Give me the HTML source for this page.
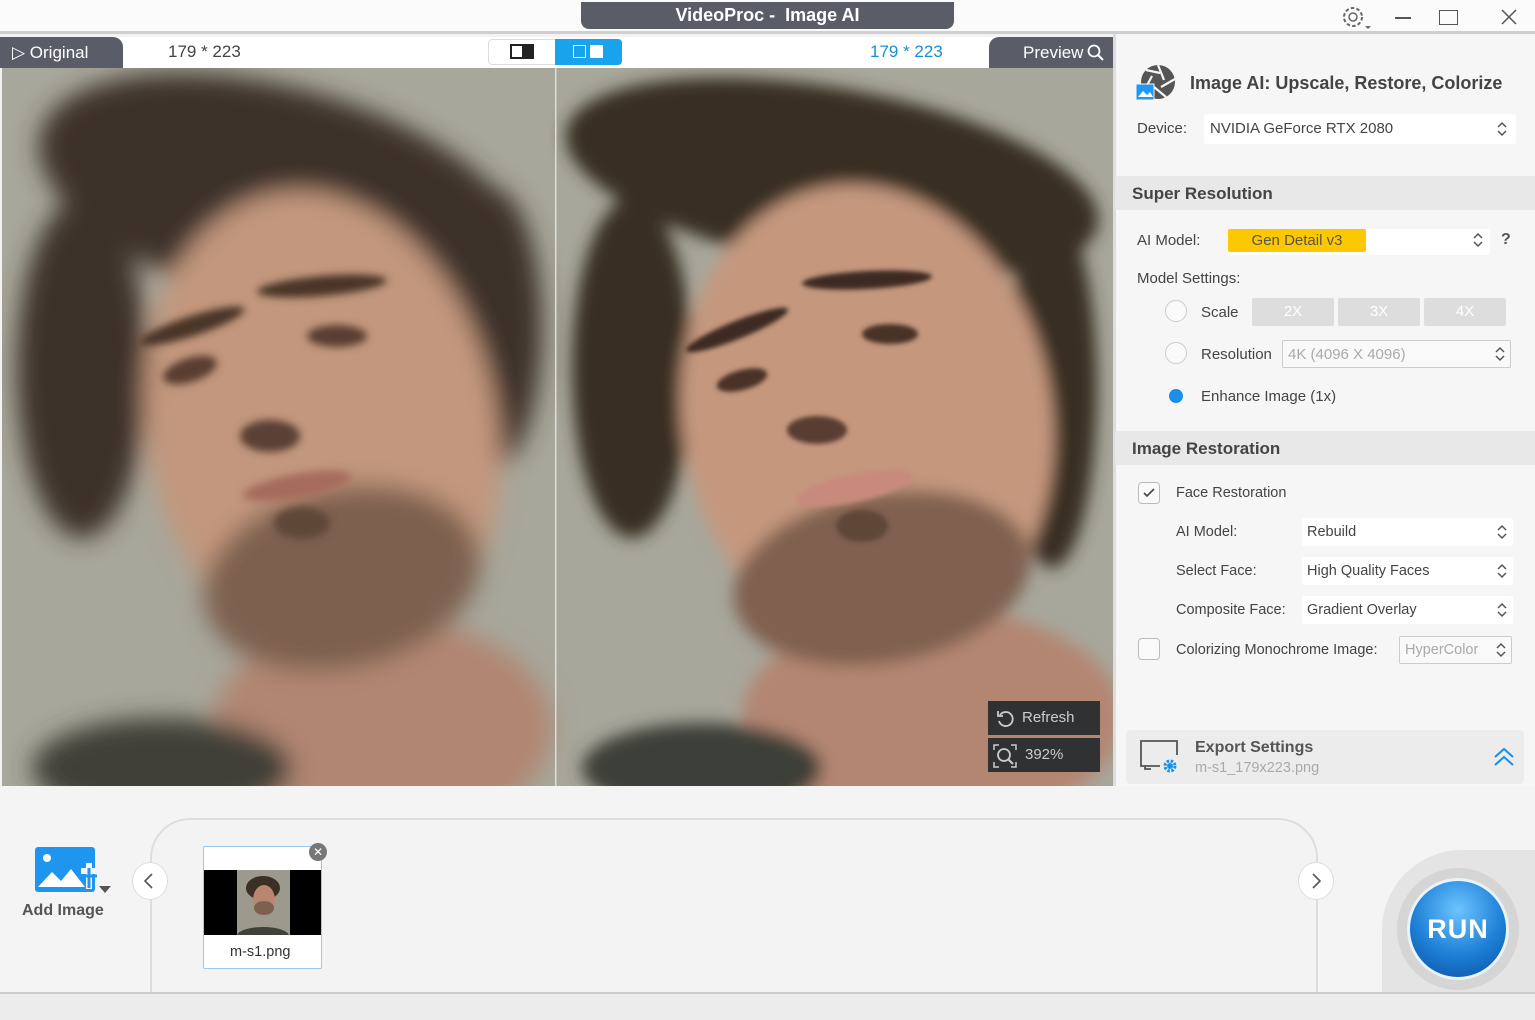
<!DOCTYPE html>
<html><head><meta charset="utf-8">
<style>
*{box-sizing:border-box;margin:0;padding:0}
body{width:1535px;height:1020px;overflow:hidden;background:#f3f3f4;font-family:"Liberation Sans",sans-serif;position:relative;color:#333}
.a{position:absolute}
.t{font-size:15px;color:#444;white-space:nowrap}
.sel{position:absolute;background:#fff;height:30px;border-radius:2px}
.sect{position:absolute;left:1115px;width:420px;height:34px;background:#e8e8e9;font-weight:bold;font-size:17px;color:#444;padding:8px 0 0 17px}
.radio{position:absolute;width:22px;height:22px;border-radius:50%;border:1px solid #ccc;background:#fafafa}
.btn{position:absolute;top:298px;width:82px;height:28px;background:#ddd;color:#fff;font-size:15px;text-align:center;line-height:28px;border-radius:2px}
.chk{position:absolute;width:22px;height:22px;border:1px solid #bbb;border-radius:4px;background:#fafafa}
</style></head><body>
<div class="a" style="left:0;top:0;width:1535px;height:34px;background:#fbfbfb;border-bottom:3px solid #cfcfcf"></div>
<div class="a" style="left:581px;top:2px;width:373px;height:27px;background:#5a5c68;border-radius:0 0 8px 8px;color:#fff;font-weight:bold;font-size:18px;text-align:center;line-height:27px">VideoProc -&nbsp; Image AI</div>
<svg class="a" style="left:1338px;top:4px" width="36" height="28" viewBox="0 0 36 28"><circle cx="15" cy="13" r="9" fill="none" stroke="#666" stroke-width="2" stroke-dasharray="3.5 2.2"/><circle cx="15" cy="13" r="4" fill="none" stroke="#666" stroke-width="1.5"/><path d="M27 22l3 3 3-3z" fill="#666"/></svg>
<div class="a" style="left:1395px;top:17px;width:16px;height:1.5px;background:#555"></div>
<div class="a" style="left:1439px;top:10px;width:19px;height:15px;border:1.5px solid #555"></div>
<svg class="a" style="left:1501px;top:9px" width="16" height="16"><path d="M1 1L15 15M15 1L1 15" stroke="#555" stroke-width="1.5"/></svg>

<div class="a" style="left:0;top:37px;width:1113px;height:31px;background:#fff"></div>
<div class="a" style="left:0;top:37px;width:123px;height:31px;background:#5a5c68;border-radius:0 10px 0 0;color:#fff;font-size:17px;line-height:31px;padding-left:12px">▷ Original</div>
<div class="a" style="left:989px;top:37px;width:124px;height:31px;background:#5a5c68;border-radius:10px 0 0 0;color:#fff;font-size:17px;line-height:31px;padding-left:34px">Preview
<svg style="position:absolute;left:98px;top:7px" width="18" height="18"><circle cx="7" cy="7" r="5.5" fill="none" stroke="#fff" stroke-width="1.8"/><path d="M11 11l5 5" stroke="#fff" stroke-width="2"/></svg></div>
<div class="a t" style="left:168px;top:42px;font-size:17px">179 * 223</div>
<div class="a t" style="left:870px;top:42px;font-size:17px;color:#1a8fd6">179 * 223</div>
<div class="a" style="left:488px;top:39px;width:134px;height:26px;border:1px solid #ddd;border-radius:4px;background:#fff"></div>
<div class="a" style="left:510px;top:44px;width:24px;height:15px;border:2px solid #222;background:linear-gradient(90deg,#fff 50%,#222 50%)"></div>
<div class="a" style="left:555px;top:39px;width:67px;height:26px;background:#19a3ec;border-radius:0 4px 4px 0"></div>
<div class="a" style="left:573px;top:45px;width:13px;height:13px;border:1.5px solid #fff"></div>
<div class="a" style="left:590px;top:45px;width:13px;height:13px;background:#fff"></div>

<svg class="a" style="left:2px;top:68px" width="1111" height="718" viewBox="0 0 1111 718">
<defs><filter id="b" x="-20%" y="-20%" width="140%" height="140%"><feGaussianBlur stdDeviation="12"/></filter>
<filter id="b2" x="-20%" y="-20%" width="140%" height="140%"><feGaussianBlur stdDeviation="8"/></filter>
<filter id="f" x="-50%" y="-50%" width="200%" height="200%"><feGaussianBlur stdDeviation="4"/></filter>
<filter id="f2" x="-50%" y="-50%" width="200%" height="200%"><feGaussianBlur stdDeviation="2.5"/></filter></defs>
<rect width="553" height="718" fill="#a8a79b"/>
<rect x="554" width="557" height="718" fill="#a8a79c"/>
<g filter="url(#b)">
<ellipse cx="380" cy="660" rx="170" ry="110" fill="#b18672"/>
<ellipse cx="160" cy="700" rx="130" ry="50" fill="#3f4139"/>
<ellipse cx="280" cy="130" rx="250" ry="110" fill="#3e3329" transform="rotate(15 280 130)"/>
<ellipse cx="80" cy="300" rx="65" ry="170" fill="#3e3329"/>
<ellipse cx="490" cy="260" rx="50" ry="140" fill="#3e3329"/>
<ellipse cx="320" cy="360" rx="175" ry="240" fill="#c2977d" transform="rotate(-12 320 360)"/>
<ellipse cx="340" cy="510" rx="140" ry="90" fill="#7e604f" transform="rotate(-12 340 510)"/>
</g>
<g filter="url(#f)">
<ellipse cx="190" cy="258" rx="55" ry="10" fill="#4a3428" transform="rotate(-18 190 258)"/>
<ellipse cx="320" cy="218" rx="65" ry="10" fill="#4a3428" transform="rotate(-5 320 218)"/>
<ellipse cx="188" cy="302" rx="28" ry="12" fill="#5a3e32" transform="rotate(-18 188 302)"/>
<ellipse cx="335" cy="268" rx="30" ry="11" fill="#5a3e32"/>
<ellipse cx="268" cy="368" rx="30" ry="16" fill="#5a4034"/>
<ellipse cx="295" cy="418" rx="55" ry="12" fill="#a66c5c" transform="rotate(-10 295 418)"/>
<ellipse cx="300" cy="455" rx="28" ry="16" fill="#5e4638"/>
</g>
<g filter="url(#b2)">
<ellipse cx="930" cy="650" rx="190" ry="110" fill="#b38672"/>
<ellipse cx="700" cy="700" rx="120" ry="45" fill="#3d3f38"/>
<ellipse cx="830" cy="110" rx="270" ry="90" fill="#392d23" transform="rotate(10 830 110)"/>
<ellipse cx="630" cy="300" rx="60" ry="170" fill="#392d23"/>
<ellipse cx="1050" cy="320" rx="45" ry="180" fill="#392d23"/>
<ellipse cx="865" cy="350" rx="185" ry="235" fill="#c5987e" transform="rotate(-10 865 350)"/>
<ellipse cx="880" cy="510" rx="150" ry="85" fill="#806050" transform="rotate(-10 880 510)"/>
</g>
<g filter="url(#f2)">
<ellipse cx="735" cy="262" rx="55" ry="9" fill="#3e2a20" transform="rotate(-22 735 262)"/>
<ellipse cx="865" cy="212" rx="65" ry="9" fill="#3e2a20" transform="rotate(-3 865 212)"/>
<ellipse cx="740" cy="312" rx="26" ry="10" fill="#4a3228" transform="rotate(-15 740 312)"/>
<ellipse cx="888" cy="266" rx="28" ry="10" fill="#4a3228"/>
<ellipse cx="815" cy="362" rx="30" ry="14" fill="#5a3e32"/>
<ellipse cx="852" cy="420" rx="60" ry="14" fill="#c88a7c" transform="rotate(-12 852 420)"/>
<ellipse cx="860" cy="458" rx="26" ry="16" fill="#5e4638"/>
</g>
<rect x="553" width="1.5" height="718" fill="#ddd"/>
</svg>
<div class="a" style="left:988px;top:701px;width:112px;height:34px;background:#2f3132;color:#ccc;font-size:15px;line-height:34px;padding-left:34px">Refresh
<svg style="position:absolute;left:8px;top:8px" width="20" height="20"><path d="M4 6A7 7 0 1 1 3 12" fill="none" stroke="#ccc" stroke-width="1.8"/><path d="M2 2v5h5" fill="none" stroke="#ccc" stroke-width="1.8"/></svg></div>
<div class="a" style="left:988px;top:738px;width:112px;height:34px;background:#2f3132;color:#ccc;font-size:15px;line-height:34px;padding-left:37px">392%
<svg style="position:absolute;left:4px;top:5px" width="26" height="26"><path d="M2 7V2h5M19 2h5v5M24 19v5h-5M7 24H2v-5" fill="none" stroke="#ccc" stroke-width="1.5"/><circle cx="12" cy="12" r="6" fill="none" stroke="#ccc" stroke-width="1.8"/><path d="M16 16l5 5" stroke="#ccc" stroke-width="2"/></svg></div>

<div class="a" style="left:1113px;top:34px;width:422px;height:752px;background:#f6f6f7;border-left:3px solid #ddd"></div>
<svg class="a" style="left:1136px;top:64px" width="42" height="38" viewBox="0 0 42 38"><circle cx="22" cy="18" r="17" fill="#555"/><path d="M22 1L28 16M39 15L25 23M30 33L18 23M8 27L16 12M10 6L24 9" stroke="#f6f6f7" stroke-width="2.2"/><rect x="0" y="20" width="18" height="16" fill="#2196f3" stroke="#f6f6f7" stroke-width="1"/><path d="M2 33l5-6 4 4 3-3 3 5z" fill="#fff"/></svg>
<div class="a" style="left:1190px;top:73px;font-weight:bold;font-size:18px;color:#444">Image AI: Upscale, Restore, Colorize</div>
<div class="a t" style="left:1137px;top:120px">Device:</div>
<div class="sel" style="left:1204px;top:114px;width:312px"><span class="t" style="position:absolute;left:6px;top:6px">NVIDIA GeForce RTX 2080</span></div>
<svg class="a" style="left:1496px;top:121px" width="12" height="16"><path d="M2 6l4-4 4 4M2 10l4 4 4-4" fill="none" stroke="#555" stroke-width="1.5"/></svg>

<div class="sect" style="top:176px">Super Resolution</div>
<div class="a t" style="left:1137px;top:232px">AI Model:</div>
<div class="sel" style="left:1228px;top:229px;width:262px;height:26px"></div>
<div class="a" style="left:1228px;top:229px;width:138px;height:23px;background:#fdc800;border-radius:2px;font-size:15px;color:#555;text-align:center;line-height:23px">Gen Detail v3</div>
<svg class="a" style="left:1472px;top:232px" width="12" height="16"><path d="M2 6l4-4 4 4M2 10l4 4 4-4" fill="none" stroke="#555" stroke-width="1.5"/></svg>
<div class="a" style="left:1501px;top:231px;font-weight:bold;font-size:16px;color:#555">?</div>
<div class="a t" style="left:1137px;top:270px">Model Settings:</div>
<div class="radio" style="left:1165px;top:300px"></div>
<div class="a t" style="left:1201px;top:304px">Scale</div>
<div class="btn" style="left:1252px">2X</div><div class="btn" style="left:1338px">3X</div><div class="btn" style="left:1424px">4X</div>
<div class="radio" style="left:1165px;top:342px"></div>
<div class="a t" style="left:1201px;top:346px">Resolution</div>
<div class="a" style="left:1282px;top:340px;width:229px;height:28px;border:1px solid #ccc;background:#f9f9f9;border-radius:2px"><span class="t" style="position:absolute;left:5px;top:5px;color:#aaa">4K (4096 X 4096)</span></div>
<svg class="a" style="left:1494px;top:346px" width="12" height="16"><path d="M2 6l4-4 4 4M2 10l4 4 4-4" fill="none" stroke="#555" stroke-width="1.5"/></svg>
<div class="a" style="left:1169px;top:389px;width:14px;height:14px;border-radius:50%;background:#1a8fe8"></div>
<div class="a t" style="left:1201px;top:388px">Enhance Image (1x)</div>

<div class="sect" style="top:431px">Image Restoration</div>
<div class="chk" style="left:1138px;top:482px"></div>
<svg class="a" style="left:1142px;top:486px" width="14" height="14"><path d="M2 7l3 3 7-7" fill="none" stroke="#444" stroke-width="1.6"/></svg>
<div class="a t" style="left:1176px;top:485px;font-size:14.5px">Face Restoration</div>
<div class="a t" style="left:1176px;top:524px;font-size:14.5px">AI Model:</div>
<div class="sel" style="left:1302px;top:518px;width:211px;height:28px"><span class="t" style="position:absolute;left:5px;top:6px;font-size:14.5px">Rebuild</span></div>
<div class="a t" style="left:1176px;top:563px;font-size:14.5px">Select Face:</div>
<div class="sel" style="left:1302px;top:557px;width:211px;height:28px"><span class="t" style="position:absolute;left:5px;top:6px;font-size:14.5px">High Quality Faces</span></div>
<div class="a t" style="left:1176px;top:602px;font-size:14.5px">Composite Face:</div>
<div class="sel" style="left:1302px;top:596px;width:211px;height:28px"><span class="t" style="position:absolute;left:5px;top:6px;font-size:14.5px">Gradient Overlay</span></div>
<svg class="a" style="left:1496px;top:524px" width="12" height="16"><path d="M2 6l4-4 4 4M2 10l4 4 4-4" fill="none" stroke="#555" stroke-width="1.5"/></svg>
<svg class="a" style="left:1496px;top:563px" width="12" height="16"><path d="M2 6l4-4 4 4M2 10l4 4 4-4" fill="none" stroke="#555" stroke-width="1.5"/></svg>
<svg class="a" style="left:1496px;top:602px" width="12" height="16"><path d="M2 6l4-4 4 4M2 10l4 4 4-4" fill="none" stroke="#555" stroke-width="1.5"/></svg>
<div class="chk" style="left:1138px;top:638px"></div>
<div class="a t" style="left:1176px;top:642px;font-size:14.5px">Colorizing Monochrome Image:</div>
<div class="a" style="left:1399px;top:636px;width:113px;height:28px;border:1px solid #ccc;background:#f9f9f9;border-radius:2px"><span class="t" style="position:absolute;left:5px;top:5px;color:#aaa;font-size:14.5px">HyperColor</span></div>
<svg class="a" style="left:1495px;top:642px" width="12" height="16"><path d="M2 6l4-4 4 4M2 10l4 4 4-4" fill="none" stroke="#555" stroke-width="1.5"/></svg>

<div class="a" style="left:1126px;top:730px;width:398px;height:54px;background:#ececed;border-radius:4px"></div>
<svg class="a" style="left:1138px;top:738px" width="44" height="38"><path d="M22 28H3V3h36v14" fill="none" stroke="#555" stroke-width="1.8"/><path d="M7 28v3h6" fill="none" stroke="#555" stroke-width="1.8"/><circle cx="32" cy="28" r="5" fill="none" stroke="#1a8fe8" stroke-width="3" stroke-dasharray="2.5 1.5"/><circle cx="32" cy="28" r="3" fill="#1a8fe8"/></svg>
<div class="a" style="left:1195px;top:739px;font-weight:bold;font-size:16px;color:#555">Export Settings</div>
<div class="a" style="left:1195px;top:760px;font-size:14.5px;color:#aaa">m-s1_179x223.png</div>
<svg class="a" style="left:1493px;top:747px" width="22" height="20"><path d="M2 10l9-8 9 8M2 18l9-8 9 8" fill="none" stroke="#1a8fe8" stroke-width="2"/></svg>

<div class="a" style="left:0;top:786px;width:1535px;height:206px;background:#f4f4f5"></div>
<div class="a" style="left:150px;top:818px;width:1168px;height:174px;border:2px solid #ddd;border-bottom:none;border-radius:40px 40px 0 0;background:#f3f3f4"></div>
<div class="a" style="left:0;top:992px;width:1535px;height:28px;background:#ececec;border-top:2px solid #ccc"></div>
<svg class="a" style="left:33px;top:845px" width="80" height="52"><rect x="2" y="2" width="60" height="45" rx="3" fill="#1e96ef"/><circle cx="14" cy="13" r="4" fill="#fff"/><path d="M5 42l14-15 9 9 10-12 14 18z" fill="#fff"/><path d="M48 26h16M56 18v26" stroke="#f4f4f5" stroke-width="6"/><path d="M48 31h16M56 23v20" stroke="#1e96ef" stroke-width="3"/><path d="M66 41h12l-6 7z" fill="#555"/></svg>
<div class="a" style="left:22px;top:902px;font-weight:bold;font-size:16px;color:#555">Add Image</div>
<div class="a" style="left:132px;top:862px;width:36px;height:38px;border-radius:50%;background:#fff;border:1px solid #ddd"></div>
<svg class="a" style="left:143px;top:873px" width="12" height="16"><path d="M9 1L2 8l7 7" fill="none" stroke="#555" stroke-width="1.6"/></svg>
<div class="a" style="left:1298px;top:862px;width:36px;height:38px;border-radius:50%;background:#fff;border:1px solid #ddd"></div>
<svg class="a" style="left:1311px;top:873px" width="12" height="16"><path d="M2 1l7 7-7 7" fill="none" stroke="#555" stroke-width="1.6"/></svg>
<div class="a" style="left:203px;top:846px;width:119px;height:123px;background:#fff;border:1.5px solid #9cc8ee;border-radius:2px"></div>
<div class="a" style="left:204px;top:870px;width:117px;height:65px;background:#000"></div>
<svg class="a" style="left:237px;top:870px" width="53" height="65"><rect width="53" height="65" fill="#9b9a8c"/><ellipse cx="26" cy="18" rx="17" ry="12" fill="#3b3026"/><ellipse cx="27" cy="30" rx="11" ry="15" fill="#b98770"/><ellipse cx="27" cy="38" rx="10" ry="7" fill="#7e604f"/><ellipse cx="26" cy="66" rx="26" ry="9" fill="#3f423a"/></svg>
<div class="a" style="left:230px;top:944px;font-size:14.5px;color:#333">m-s1.png</div>
<div class="a" style="left:309px;top:843px;width:18px;height:18px;border-radius:50%;background:#777;color:#fff;font-size:12px;text-align:center;line-height:18px">✕</div>
<div class="a" style="left:1382px;top:850px;width:160px;height:142px;border-radius:80px 0 0 0;background:#e4e4e5"></div>
<div class="a" style="left:1397px;top:868px;width:122px;height:122px;border-radius:50%;background:#d5d5d6"></div>
<div class="a" style="left:1407px;top:878px;width:102px;height:102px;border-radius:50%;background:radial-gradient(circle at 50% 30%,#6cc4ff,#1d7fd6 55%,#0b4fa0);border:3px solid #e8f3fb;color:#fff;font-weight:bold;font-size:27px;text-align:center;line-height:96px;letter-spacing:1px">RUN</div>
</body></html>
